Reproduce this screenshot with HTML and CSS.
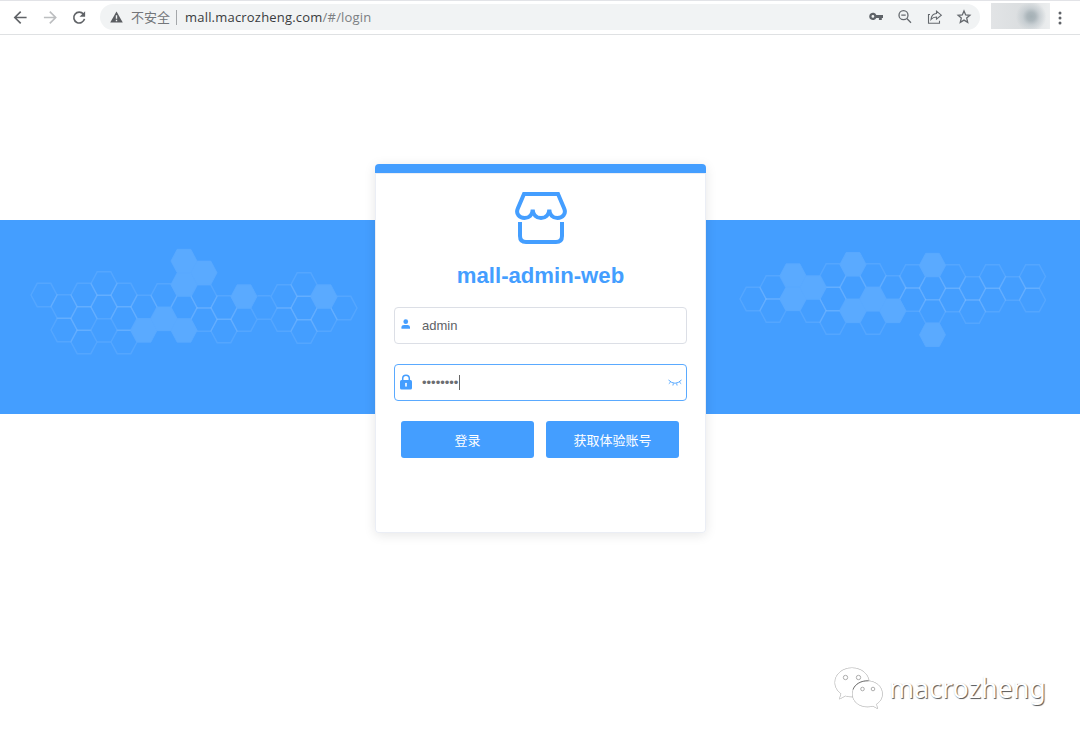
FILE: index.html
```html
<!DOCTYPE html>
<html lang="zh-CN">
<head>
<meta charset="utf-8">
<title>mall-admin-web</title>
<link rel="stylesheet" href="styles.css">
</head>
<body>
<header class="toolbar">
  <nav class="nav">
    <svg class="nav-icon" viewBox="0 0 16 16"><path d="M15 8H2.500M8.500 1.500L2 8l6.500 6.500"/></svg>
    <svg class="nav-icon disabled" viewBox="0 0 16 16"><path d="M1 8h12.500M7.500 1.500L14 8l-6.500 6.500"/></svg>
    <svg class="nav-icon" viewBox="0 0 16 16"><path d="M12.600 4.200A6 6 0 1 0 13.800 9.500"/><path class="solid" d="M14.500 1v6.200H8.300z"/></svg>
  </nav>
  <div class="address">
    <svg class="warn" viewBox="0 0 14 13"><path fill="#5a5d61" d="M7 .5L13.800 12.500H.2z"/><path stroke="#f1f3f4" stroke-width="1.500" d="M7 4.500v4M7 9.500v1.500"/></svg>
    <span class="insecure">不安全</span>
    <span class="divider"></span>
    <span class="url">mall.macrozheng.com<span class="path">/#/login</span></span>
    <div class="actions">
      <svg viewBox="0 0 16 16"><path fill="#5f6368" fill-rule="evenodd" d="M8.300 5.900H15v3h-1.200v2h-2.900v-2H8.300A3.700 3.700 0 1 1 8.300 5.900zM4.900 6a1.400 1.400 0 1 0 0 2.800 1.400 1.400 0 0 0 0-2.800z"/></svg>
      <svg viewBox="0 0 16 16"><g class="line"><circle cx="6.500" cy="6.200" r="4.500"/><path d="M9.800 9.500l4.200 4.200M4.300 6.200h4.400"/></g></svg>
      <svg viewBox="0 0 16 16"><path class="line thin" d="M3 5.500H1.500v8.700h11v-2.500M9.500 2.200l4.800 4-4.800 4V8C7 8 5.300 8.800 4 10.500c.3-3.200 2-5.700 5.500-6z"/></svg>
      <svg viewBox="0 0 16 16"><path class="line" d="M8 2l1.700 3.900 4.200.4-3.200 2.800 1 4.200L8 11.100l-3.700 2.200 1-4.200-3.200-2.800 4.200-.4z"/></svg>
    </div>
  </div>
  <div class="profile"></div>
  <svg class="more" viewBox="0 0 4 16"><circle cx="2" cy="3" r="1.500"/><circle cx="2" cy="8" r="1.500"/><circle cx="2" cy="13" r="1.500"/></svg>
</header>

<main class="page">
  <div class="band">
    <svg class="hexes" viewBox="0 219.500 1080 194.500">
      <defs><path id="hex" d="M-13 0L-6.800-11.700H6.800L13 0 6.800 11.700H-6.800z"/></defs>
      <g class="outline">
        <use href="#hex" x="44" y="294.500"/><use href="#hex" x="64" y="306"/><use href="#hex" x="64" y="329.500"/>
        <use href="#hex" x="84" y="294.500"/><use href="#hex" x="84" y="318"/><use href="#hex" x="84" y="341.500"/>
        <use href="#hex" x="104" y="283"/><use href="#hex" x="104" y="306.500"/>
        <use href="#hex" x="124" y="294.500"/><use href="#hex" x="124" y="318"/><use href="#hex" x="124" y="341.500"/>
        <use href="#hex" x="144" y="306.500"/><use href="#hex" x="164" y="295"/><use href="#hex" x="184" y="307"/>
        <use href="#hex" x="204" y="296"/><use href="#hex" x="204" y="319"/><use href="#hex" x="224" y="307"/><use href="#hex" x="224" y="330.500"/>
        <use href="#hex" x="244" y="319"/><use href="#hex" x="284" y="296"/><use href="#hex" x="284" y="319"/>
        <use href="#hex" x="304" y="284"/><use href="#hex" x="304" y="307.500"/><use href="#hex" x="304" y="331"/>
        <use href="#hex" x="324" y="319"/><use href="#hex" x="344" y="307.500"/>
        <path d="M97.400 341.500h13.200M257.400 295.300h13.200M257.400 318.800h13.200"/>
        <use href="#hex" x="753" y="298.500"/><use href="#hex" x="773" y="287"/><use href="#hex" x="773" y="310"/>
        <use href="#hex" x="813" y="310"/><use href="#hex" x="833" y="275"/><use href="#hex" x="833" y="298.500"/><use href="#hex" x="833" y="322"/>
        <use href="#hex" x="853" y="287"/><use href="#hex" x="873" y="275"/><use href="#hex" x="873" y="322"/><use href="#hex" x="893" y="287"/>
        <use href="#hex" x="912.500" y="276"/><use href="#hex" x="912.500" y="299"/>
        <use href="#hex" x="932.500" y="287.700"/><use href="#hex" x="932.500" y="311"/>
        <use href="#hex" x="952.500" y="276"/><use href="#hex" x="952.500" y="299.500"/>
        <use href="#hex" x="972.500" y="288"/><use href="#hex" x="972.500" y="311"/>
        <use href="#hex" x="992.500" y="276"/><use href="#hex" x="992.500" y="299.500"/>
        <use href="#hex" x="1012.500" y="288"/><use href="#hex" x="1032.500" y="276"/><use href="#hex" x="1032.500" y="299.500"/>
      </g>
      <g class="filled">
        <use href="#hex" x="144" y="330"/><use href="#hex" x="164" y="318.500"/><use href="#hex" x="184" y="330"/>
        <use href="#hex" x="184" y="260.500"/><use href="#hex" x="184" y="284"/><use href="#hex" x="204" y="272.300"/>
        <use href="#hex" x="244" y="296"/><use href="#hex" x="324" y="296"/>
        <use href="#hex" x="793" y="275"/><use href="#hex" x="793" y="298.500"/><use href="#hex" x="813" y="287"/>
        <use href="#hex" x="853" y="263.700"/><use href="#hex" x="853" y="310.500"/><use href="#hex" x="873" y="298.700"/><use href="#hex" x="893" y="310.500"/>
        <use href="#hex" x="932.500" y="264.500"/><use href="#hex" x="932.500" y="334.300"/>
      </g>
    </svg>
  </div>

  <section class="card">
    <svg class="logo" viewBox="0 0 52 52"><g fill="none" stroke="#449eff" stroke-width="4"><path d="M9 2H43L49.200 16.500C51.500 22 47.500 26 42.500 26C38 26 34.500 23 34.300 17.500C34 23 30.500 26 26 26S18 23 17.700 17.500C17.500 23 14 26 9.500 26C4.500 26 .5 22 2.800 16.500Z"/><path d="M5 30V44Q5 50 11 50H41Q47 50 47 44V30"/></g></svg>
    <h1 class="title">mall-admin-web</h1>
    <form class="form">
      <div class="field">
        <svg class="user" viewBox="0 0 10 10"><circle cx="5" cy="2.600" r="2.500"/><path d="M.5 10V8.500Q.5 6 3.200 6H6.800Q9.500 6 9.500 8.500V10z"/></svg>
        <span class="value name">admin</span>
      </div>
      <div class="field focused">
        <svg class="lock" viewBox="0 0 12 16"><path fill="none" stroke="#449eff" stroke-width="1.500" d="M2.700 7V4.500a3.300 3.300 0 0 1 6.600 0V7"/><rect y="6" width="12" height="9.500" rx="1.500"/><path d="M6 9.500v2.500" stroke="#fff" stroke-width="1.600" stroke-linecap="round"/></svg>
        <span class="value dots">••••••••</span><span class="caret"></span>
        <svg class="eye" viewBox="0 0 14 8"><path d="M.5 1Q7 7.500 13.500 1M2.700 3L.8 4.700M5.400 4.400L4.900 6.500M8.600 4.400l.5 2.100M11.300 3l1.900 1.700"/></svg>
      </div>
      <div class="buttons">
        <button class="btn" type="button">登录</button>
        <button class="btn" type="button">获取体验账号</button>
      </div>
    </form>
  </section>

  <div class="watermark">
    <svg viewBox="0 0 50 44"><g class="bubble"><path d="M18 2C8 2 1 8.500 1 16.500c0 4.700 2.500 8.500 6.200 11.200L5.500 33l6-3.200c2 .7 4.200 1 6.500 1 10 0 17-6.500 17-14.400S28 2 18 2z"/></g><g class="bubble"><path d="M33.500 15C25 15 18.500 20.500 18.500 28s6.500 12.800 15 12.800c1.900 0 3.700-.3 5.400-.8l4.600 2.500-1.200-4.200c3.700-2.300 6-6 6-10.300C48.300 20.500 42 15 33.500 15z"/></g><path class="overlap" d="M19 23.500C21 18 27 14.500 34.500 14.800"/><g class="eyes"><circle cx="11.500" cy="11.500" r="2.200"/><circle cx="24.500" cy="11.500" r="2.200"/><circle cx="28.500" cy="23" r="1.800"/><circle cx="39" cy="23" r="1.800"/></g></svg>
    <span class="account">macrozheng</span>
  </div>
</main>
</body>
</html>
```
FILE: styles.css
```css
* { box-sizing: border-box; }
body {
  margin: 0;
  width: 1080px;
  height: 740px;
  overflow: hidden;
  background: #fff;
  font-family: "Liberation Sans", "Noto Sans CJK SC", sans-serif;
}
svg { display: block; flex: none; }
.toolbar {
  display: flex;
  align-items: center;
  height: 35px;
  padding: 0 18px 0 13px;
  border-top: 1px solid #e2e3e7;
  border-bottom: 1px solid #dfe1e3;
}
.nav { display: flex; gap: 15px; width: 87px; }
.nav-icon {
  width: 14.500px;
  height: 15px;
  fill: none;
  stroke: #606367;
  stroke-width: 1.800;
}
.nav-icon.disabled { stroke: #bcbec0; }
.nav-icon .solid { fill: #606367; stroke: none; }
.address {
  display: flex;
  align-items: center;
  width: 880px;
  height: 26px;
  margin-bottom: 1px;
  padding: 0 8px 0 10px;
  border-radius: 13px;
  background: #f1f3f4;
}
.warn { width: 13px; height: 12px; margin-right: 1px; }
.insecure {
  width: 41px;
  margin-left: 7px;
  font-family: "Noto Sans CJK SC", sans-serif;
  font-size: 13px;
  line-height: 20px;
  color: #73767a;
}
.divider { width: 1px; height: 15px; margin: 0 8px 0 4px; background: #a4a7aa; }
.url {
  flex: 1;
  font-family: "Open Sans", sans-serif;
  font-size: 13px;
  line-height: 20px;
  letter-spacing: .2px;
  color: #3a3c40;
}
.path { color: #7c7f83; }
.actions { display: flex; gap: 13.500px; }
.actions svg { width: 16px; height: 16px; }
.line { fill: none; stroke: #65696e; stroke-width: 1.300; }
.thin { stroke-width: 1.100; }
.profile {
  width: 59px;
  height: 26px;
  margin: 0 9px 3px 11px;
  background: radial-gradient(circle at 68% 52%, #a4b0b5 0, #adb7bc 10%, rgba(190, 198, 203, .7) 20%, transparent 36%), linear-gradient(90deg, #e2e4e6, #dbdee0 50%, #eceeef);
}
.more { width: 4px; height: 16px; margin-left: -1px; fill: #5f6368; }
.page {
  display: grid;
  grid-template-rows: 184.500px 194.500px 1fr;
  grid-template-columns: 375px 331px 1fr;
  height: 705px;
}
.band { grid-row: 2; grid-column: 1 / -1; background: #449eff; }
.hexes { width: 1080px; height: 194.500px; }
.outline { fill: none; stroke: rgba(255, 255, 255, .09); stroke-width: 1.400; }
.filled { fill: #5aaaff; stroke: #5aaaff; stroke-width: .8; }
.card {
  grid-row: 1 / -1;
  grid-column: 2;
  z-index: 1;
  display: flex;
  flex-direction: column;
  align-items: center;
  height: 369px;
  margin-top: 129px;
  border-top: 9.500px solid #449eff;
  border-radius: 4px;
  background: #fff;
  box-shadow: inset 0 0 0 1px #ebeef5, 0 2px 12px rgba(0, 0, 0, .1);
}
.logo { width: 52px; height: 52px; margin-top: 18.500px; }
.title {
  margin: 19px 0 0;
  font-size: 22.150px;
  line-height: 26px;
  color: #449eff;
}
.form { width: 293px; margin-top: 18px; }
.field {
  display: flex;
  align-items: center;
  height: 37px;
  margin-bottom: 20.500px;
  padding: 0 4px 0 5px;
  border: 1px solid #dcdfe6;
  border-radius: 4px;
}
.field.focused { border-color: #5aaaff; margin-bottom: 20px; }
.user { width: 9.500px; height: 10px; margin: 0 12px 2px .5px; fill: #449eff; }
.lock { width: 12px; height: 16px; margin: 0 10.500px 2px -.5px; fill: #449eff; }
.value { font-size: 13px; line-height: 20px; color: #606266; }
.name { padding-top: 2px; }
.dots { width: 37px; padding-top: 1px; color: #6c6e72; }
.caret { width: 1px; height: 15px; background: #666; }
.eye {
  width: 14px;
  height: 8px;
  margin-left: auto;
  fill: none;
  stroke: #5aaaff;
  stroke-width: 1;
}
.buttons { display: flex; gap: 12px; padding-left: 7px; }
.btn {
  width: 133px;
  height: 37px;
  padding: 0;
  border: 0;
  border-radius: 3px;
  background: #449eff;
  font-family: "Noto Sans CJK SC", sans-serif;
  font-size: 13px;
  color: #fff;
}
.watermark {
  grid-row: 3;
  grid-column: 3;
  display: flex;
  align-self: end;
  align-items: center;
  gap: 5px;
  height: 44px;
  margin: 0 0 30px 128px;
}
.watermark svg { width: 50px; height: 44px; overflow: visible; }
.bubble { fill: #fff; filter: drop-shadow(.7px .9px .4px rgba(0, 0, 0, .7)); stroke: #eee; stroke-width: .5; }
.overlap { fill: none; stroke: #777; stroke-width: 1; }
.eyes { fill: #fff; stroke: #999; stroke-width: .8; }
.account {
  font-family: "Noto Sans", sans-serif;
  font-size: 26.800px;
  line-height: 38px;
  color: #fff;
  text-shadow: 1px 1px .8px rgba(0, 0, 0, .65), 0 0 1px rgba(0, 0, 0, .12);
}
```
